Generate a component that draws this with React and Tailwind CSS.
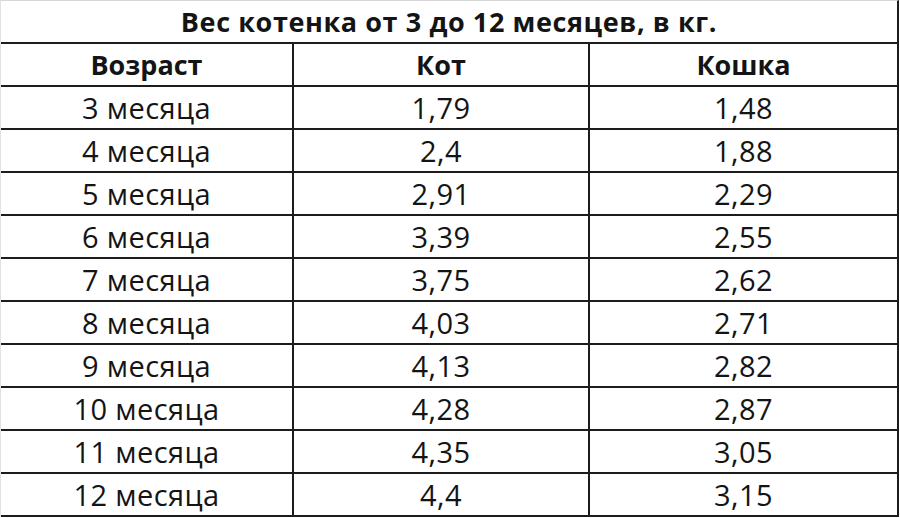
const rows = [
  ['3 месяца', '1,79', '1,48'],
  ['4 месяца', '2,4', '1,88'],
  ['5 месяца', '2,91', '2,29'],
  ['6 месяца', '3,39', '2,55'],
  ['7 месяца', '3,75', '2,62'],
  ['8 месяца', '4,03', '2,71'],
  ['9 месяца', '4,13', '2,82'],
  ['10 месяца', '4,28', '2,87'],
  ['11 месяца', '4,35', '3,05'],
  ['12 месяца', '4,4', '3,15'],
];

function Row({ cells, bold }) {
  return (
    <div className="grid grid-cols-[293px_296px_1fr] h-[43px] border-b-2 border-[#1c1c1c]">
      {cells.map((c, i) => (
        <div
          key={i}
          className={`flex items-center justify-center ${i < 2 ? 'border-r-2 border-[#1c1c1c]' : ''} ${bold ? 'font-bold text-[27px]' : 'tracking-[0.4px]'}`}
        >
          {c}
        </div>
      ))}
    </div>
  );
}

export default function App() {
  return (
    <div className="w-[900px] h-[518px] bg-white overflow-hidden">
      <div
        className="w-[899px] border-t border-l border-t-[#d6d6d6] border-l-[#e2e2e2] border-r-2 border-r-[#1c1c1c] text-[#141414] text-[29px] leading-none"
        style={{ fontFamily: '"Open Sans", Lato, sans-serif' }}
      >
        <div className="h-[43px] border-b-2 border-[#1c1c1c] flex items-center justify-center font-bold text-[27px] tracking-[0.6px]">
          Вес котенка от 3 до 12 месяцев, в кг.
        </div>
        <Row cells={['Возраст', 'Кот', 'Кошка']} bold />
        {rows.map((r) => (
          <Row key={r[0]} cells={r} />
        ))}
      </div>
    </div>
  );
}
